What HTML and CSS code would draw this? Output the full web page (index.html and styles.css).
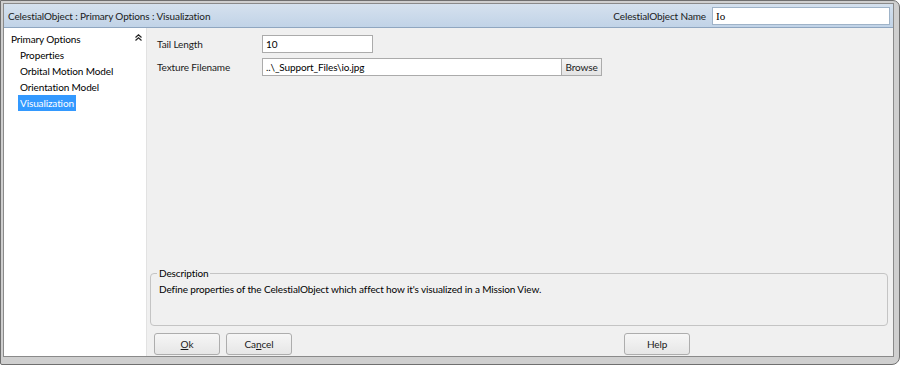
FILE: index.html
```html
<!DOCTYPE html>
<html lang="en">
<head>
    <meta charset="UTF-8">
    <title>CelestialObject : Primary Options : Visualization</title>
    <link rel="stylesheet" href="styles.css">
</head>
<body>

    <div class="window">
        <div class="frame">

            <!-- Title Bar -->
            <div class="titlebar">
                <span class="title">CelestialObject : Primary Options : Visualization</span>
                <span class="name-label">CelestialObject Name</span>
                <input class="name-input" type="text" value="Io">
            </div>

            <div class="content">

                <!-- Navigation -->
                <div class="nav">
                    <div class="nav-header">
                        <span>Primary Options</span>
                        <svg class="collapse" width="7" height="7" viewBox="0 0 7 7">
                            <polyline points="0.5,3.5 3.5,0.8 6.5,3.5" fill="none" stroke="#222" stroke-width="1.2"/>
                            <polyline points="0.5,6.5 3.5,3.8 6.5,6.5" fill="none" stroke="#222" stroke-width="1.2"/>
                        </svg>
                    </div>
                    <div class="nav-item">Properties</div>
                    <div class="nav-item">Orbital Motion Model</div>
                    <div class="nav-item">Orientation Model</div>
                    <div class="nav-item selected">Visualization</div>
                </div>

                <!-- Main Panel -->
                <div class="main">
                    <div class="fields">
                        <div class="field-row">
                            <span class="field-label">Tail Length</span>
                            <input class="text-input short" type="text" value="10">
                        </div>
                        <div class="field-row">
                            <span class="field-label">Texture Filename</span>
                            <input class="text-input long" type="text" value="..\_Support_Files\io.jpg">
                            <button class="browse">Browse</button>
                        </div>
                    </div>

                    <fieldset class="description">
                        <legend>Description</legend>
                        <p>Define properties of the CelestialObject which affect how it's visualized in a Mission View.</p>
                    </fieldset>

                    <div class="buttons">
                        <button class="dialog-button"><u>O</u>k</button>
                        <button class="dialog-button">Ca<u>n</u>cel</button>
                        <span class="spacer"></span>
                        <button class="dialog-button help">Help</button>
                    </div>
                </div>
            </div>
        </div>
    </div>

</body>
</html>
```

FILE: styles.css
```css
/* General Styling */
body {
    margin: 0;
    background-color: #ffffff;
    font-family: Lato, "Liberation Sans", sans-serif;
    font-size: 10px;
    letter-spacing: -0.12px;
    color: #000;
}
.window {
    width: 900px;
    height: 365px;
    box-sizing: border-box;
    background-color: #cfcfcf;
    border: 1px solid #6f6f6f;
    border-radius: 0 7px 8px 2px;
    padding: 2px 5px 7px 2px;
}
.frame {
    height: 100%;
    box-sizing: border-box;
    border: 1px solid #8a8a8a;
    display: flex;
    flex-direction: column;
}
/* Title Bar */
.titlebar {
    height: 24px;
    flex-shrink: 0;
    display: flex;
    align-items: center;
    padding: 1px 3px 0 4px;
    box-sizing: border-box;
    background: linear-gradient(#d5e1ee, #c1d3e7);
    border-bottom: 1px solid #8fa6c0;
}
.title {
    flex: 1;
    color: #1a1a1a;
}
.name-label {
    margin-right: 6px;
    color: #1a1a1a;
}
.name-input {
    width: 178px;
    height: 18px;
    box-sizing: border-box;
    border: 1px solid #9fb3c8;
    padding: 0 3px;
    font-family: "Liberation Serif", serif;
    font-size: 11px;
    background: #fff;
}
.content {
    flex: 1;
    display: flex;
    min-height: 0;
}
/* Navigation */
.nav {
    width: 142px;
    flex-shrink: 0;
    background-color: #fff;
    border-right: 1px solid #e2e2e2;
    padding-top: 3px;
}
.nav-header {
    display: flex;
    justify-content: space-between;
    align-items: center;
    height: 16px;
    padding: 0 4px 0 7px;
}
.collapse {
    margin-top: -3px;
}
.nav-item {
    height: 16px;
    line-height: 16px;
    margin-left: 14px;
    padding: 0 2px;
    width: fit-content;
}
.nav-item.selected {
    background-color: #3399ff;
    color: #fff;
}
/* Main Panel */
.main {
    flex: 1;
    display: flex;
    flex-direction: column;
    background-color: #f0f0f0;
    padding: 7px 5px 1px 3px;
}
.fields {
    flex: 1;
    display: flex;
    flex-direction: column;
    gap: 5px;
}
.field-row {
    display: flex;
    align-items: center;
    height: 18px;
}
.field-label {
    width: 105px;
    padding-left: 7px;
    flex-shrink: 0;
    color: #1a1a1a;
}
.text-input {
    height: 18px;
    box-sizing: border-box;
    border: 1px solid #ababab;
    background: #fff;
    padding: 0 3px;
    font-family: inherit;
    font-size: inherit;
    letter-spacing: inherit;
}
.text-input.short {
    width: 111px;
}
.text-input.long {
    width: 300px;
}
.browse {
    width: 40px;
    height: 18px;
    border: 1px solid #ababab;
    border-left: none;
    background: linear-gradient(#f4f4f4, #e4e4e4);
    padding: 0;
    font-family: inherit;
    font-size: inherit;
    letter-spacing: inherit;
    color: #1a1a1a;
}
/* Description */
.description {
    margin: 0;
    height: 58px;
    box-sizing: border-box;
    border: 1px solid #c4c4c4;
    border-radius: 4px;
    padding: 0 7px;
}
.description legend {
    padding: 0 2px;
    margin-left: -1px;
    line-height: 10px;
}
.description p {
    margin: 5px 0 0 1px;
}
/* Buttons */
.buttons {
    display: flex;
    gap: 6px;
    margin-top: 7px;
    padding-left: 4px;
}
.spacer {
    flex: 1;
}
.dialog-button {
    width: 66px;
    height: 22px;
    border: 1px solid #adadad;
    border-radius: 3px;
    background: linear-gradient(#f6f6f6, #e6e6e6);
    font-family: inherit;
    font-size: inherit;
    letter-spacing: inherit;
    color: #1a1a1a;
    padding: 0;
}
.dialog-button.help {
    margin-right: 198px;
}
```
